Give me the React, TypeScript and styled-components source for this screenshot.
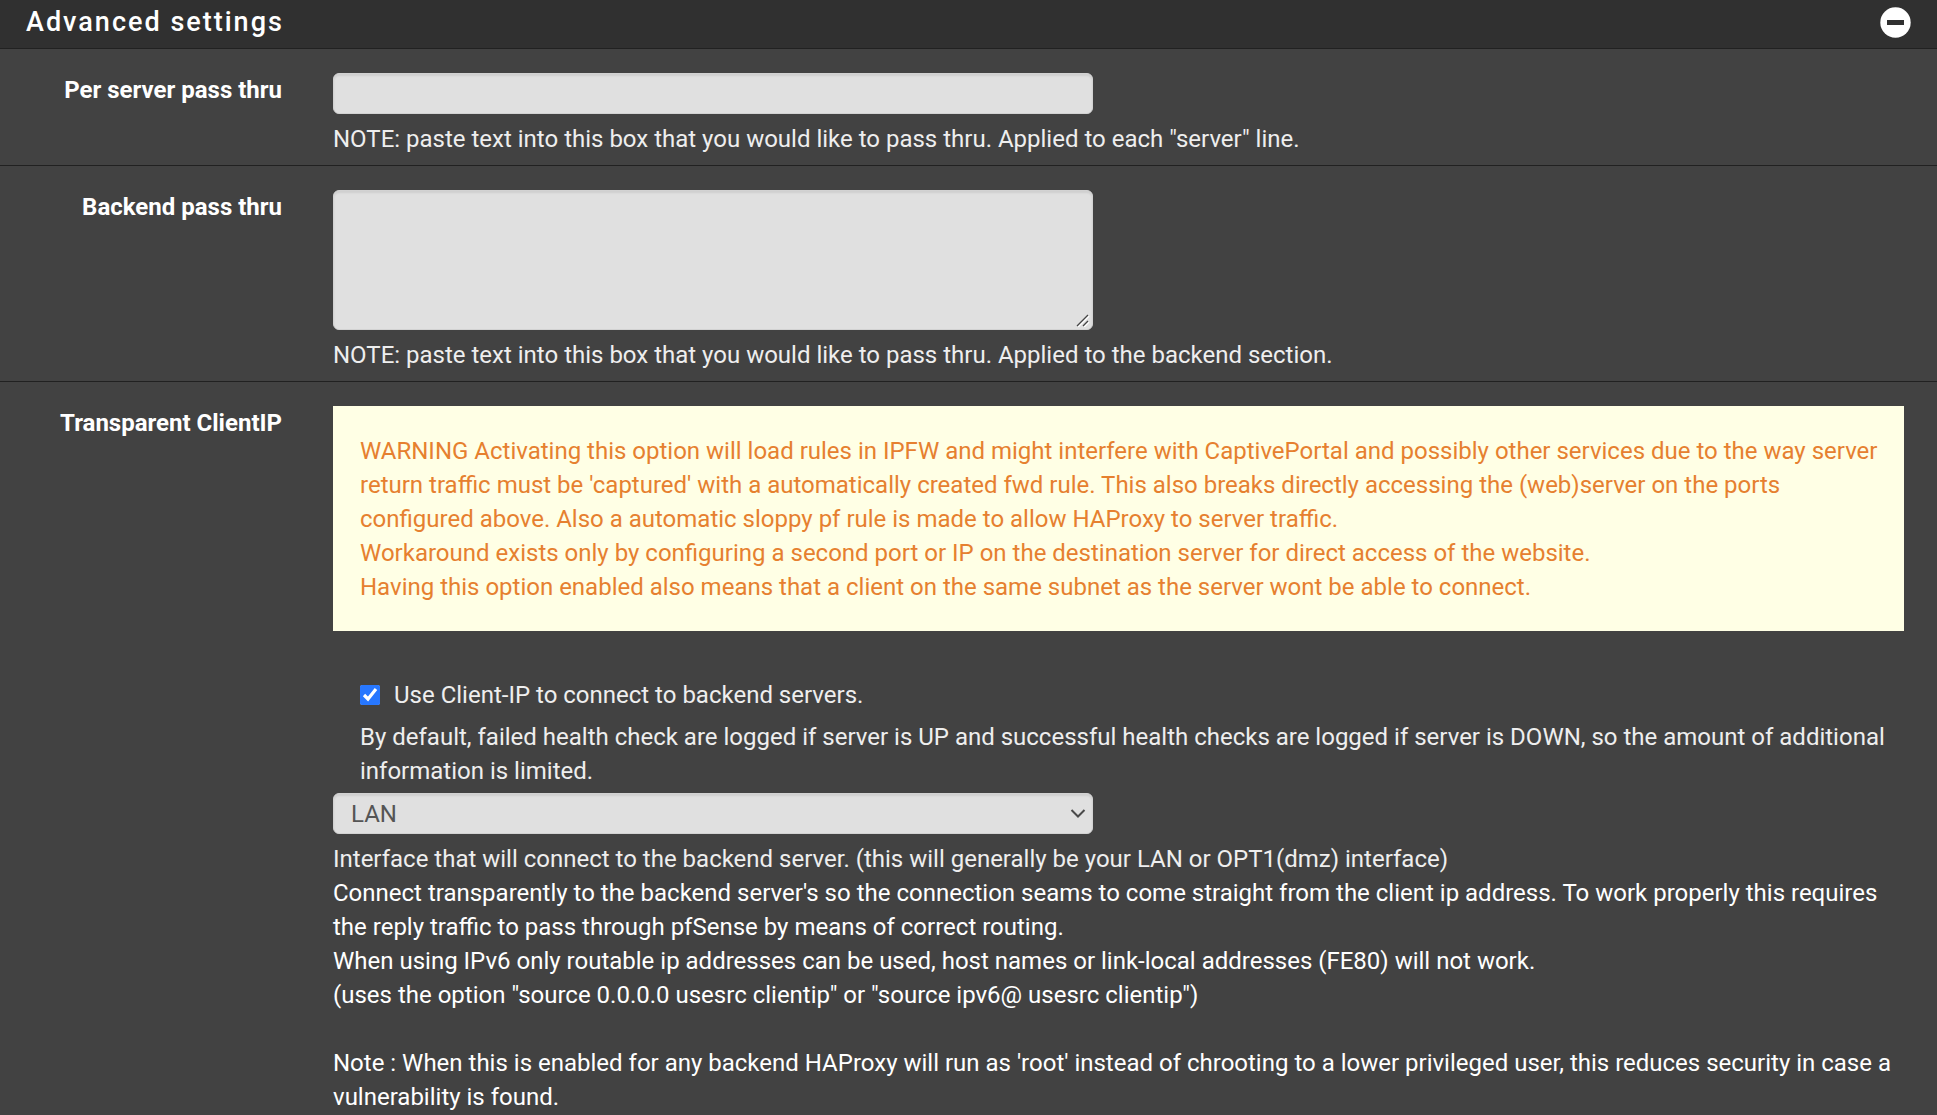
import React from "react";
import styled, { createGlobalStyle, css } from "styled-components";

const GlobalStyle = createGlobalStyle`
  *, *::before, *::after { box-sizing: border-box; }
  body {
    margin: 0;
    background: #424242;
    color: #ffffff;
    font-family: Roboto, "Liberation Sans", sans-serif;
    font-size: 24px;
    line-height: 34px;
  }
`;

const PanelHeader = styled.header`
  display: flex;
  align-items: center;
  justify-content: space-between;
  height: 49px;
  padding: 0 26px 4px;
  background: #303030;
  border-bottom: 1px solid #212121;
`;

const PanelTitle = styled.h2`
  margin: 0;
  font-size: 27px;
  font-weight: 500;
  letter-spacing: 2px;
`;

const CollapseButton = styled.button`
  display: flex;
  padding: 0;
  border: 0;
  background: none;
  color: #ffffff;
  cursor: pointer;
`;

const FormRow = styled.div`
  display: grid;
  grid-template-columns: 282px minmax(0, 1fr);
  column-gap: 51px;
  padding: 24px 33px 9px 0;
  border-bottom: 1px solid #212121;

  &:last-child {
    padding-bottom: 0;
    border-bottom: 0;
  }
`;

const labelText = css`
  font-weight: 700;
  text-align: right;
`;

const RowLabel = styled.label`
  ${labelText}
`;

const RowHeading = styled.div`
  ${labelText}
`;

const controlBox = css`
  display: block;
  width: 100%;
  margin: 0;
  border: 1px solid #d2d2d2;
  border-radius: 6px;
  background: #e0e0e0;
  box-shadow: inset 0 2px 2px rgba(0, 0, 0, 0.08);
  color: #555555;
  font: inherit;
`;

const ControlFrame = styled.div`
  position: relative;
  max-width: 760px;
`;

const TextInput = styled.input`
  ${controlBox}
  height: 41px;
  padding: 0 17px;
`;

const TextArea = styled.textarea`
  ${controlBox}
  height: 140px;
  padding: 8px 17px;
  resize: vertical;

  &::-webkit-resizer { background: transparent; }
`;

const Select = styled.select`
  ${controlBox}
  height: 41px;
  padding: 0 40px 0 17px;
  appearance: none;
`;

const Grip = styled.svg`
  position: absolute;
  right: 3px;
  bottom: 3px;
  pointer-events: none;
`;

const Chevron = styled.svg`
  position: absolute;
  right: 7px;
  top: 15px;
  pointer-events: none;
`;

const Help = styled.p`
  margin: 8px 0 0;
  color: #eeeeee;
`;

const Warning = styled.div`
  padding: 28px 16px 27px 27px;
  background: #ffffe5;
  color: #e6802f;
`;

const CheckGroup = styled.div`
  padding: 47px 16px 5px 27px;
  color: #eeeeee;
`;

const CheckLabel = styled.label`
  display: flex;
  align-items: center;
  gap: 14px;
`;

const Checkbox = styled.input`
  width: 20px;
  height: 20px;
  margin: 0;
  accent-color: #2777ff;
`;

const Description = styled.p`
  margin: 0;
`;

export default function App() {
  return (
    <>
      <GlobalStyle />
      <section aria-labelledby="advanced-title">
        <PanelHeader>
          <PanelTitle id="advanced-title">Advanced settings</PanelTitle>
          <CollapseButton type="button" aria-label="Collapse panel">
            <svg width="31" height="31" viewBox="0 0 31 31" aria-hidden="true">
              <circle cx="15.5" cy="15.5" r="15.2" fill="currentColor" />
              <rect x="7" y="13" width="17" height="5" fill="#303030" />
            </svg>
          </CollapseButton>
        </PanelHeader>

        <form>
          <FormRow>
            <RowLabel htmlFor="server-pass">Per server pass thru</RowLabel>
            <div>
              <ControlFrame>
                <TextInput id="server-pass" type="text" />
              </ControlFrame>
              <Help>
                NOTE: paste text into this box that you would like to pass thru. Applied to each "server" line.
              </Help>
            </div>
          </FormRow>

          <FormRow>
            <RowLabel htmlFor="backend-pass">Backend pass thru</RowLabel>
            <div>
              <ControlFrame>
                <TextArea id="backend-pass" />
                <Grip width="14" height="14" viewBox="0 0 14 14" aria-hidden="true">
                  <path d="M2 14 13 3M8 14l5-5" stroke="#ffffff" strokeWidth="1.5" />
                  <path d="M1 13 12 2M7 13l5-5" stroke="#444444" strokeWidth="1.3" />
                </Grip>
              </ControlFrame>
              <Help>
                NOTE: paste text into this box that you would like to pass thru. Applied to the backend section.
              </Help>
            </div>
          </FormRow>

          <FormRow>
            <RowHeading>Transparent ClientIP</RowHeading>
            <div>
              <Warning>
                WARNING Activating this option will load rules in IPFW and might interfere with CaptivePortal and
                possibly other services due to the way server return traffic must be 'captured' with a automatically
                created fwd rule. This also breaks directly accessing the (web)server on the ports configured above.
                Also a automatic sloppy pf rule is made to allow HAProxy to server traffic.
                <br />
                Workaround exists only by configuring a second port or IP on the destination server for direct access
                of the website.
                <br />
                Having this option enabled also means that a client on the same subnet as the server wont be able to
                connect.
              </Warning>
              <CheckGroup>
                <CheckLabel>
                  <Checkbox type="checkbox" defaultChecked />
                  Use Client-IP to connect to backend servers.
                </CheckLabel>
                <Help>
                  By default, failed health check are logged if server is UP and successful health checks are logged if
                  server is DOWN, so the amount of additional information is limited.
                </Help>
              </CheckGroup>
              <ControlFrame>
                <Select aria-label="Interface" defaultValue="lan">
                  <option value="lan">LAN</option>
                </Select>
                <Chevron width="16" height="11" viewBox="0 0 16 11" aria-hidden="true">
                  <path d="M1.5 2 8 8.5 14.5 2" fill="none" stroke="#4a4a4a" strokeWidth="2" />
                </Chevron>
              </ControlFrame>
              <Help>
                Interface that will connect to the backend server. (this will generally be your LAN or OPT1(dmz)
                interface)
              </Help>
              <Description>
                Connect transparently to the backend server's so the connection seams to come straight from the client
                ip address. To work properly this requires the reply traffic to pass through pfSense by means of
                correct routing.
                <br />
                When using IPv6 only routable ip addresses can be used, host names or link-local addresses (FE80) will
                not work.
                <br />
                (uses the option "source 0.0.0.0 usesrc clientip" or "source ipv6@ usesrc clientip")
                <br />
                <br />
                Note : When this is enabled for any backend HAProxy will run as 'root' instead of chrooting to a lower
                privileged user, this reduces security in case a vulnerability is found.
              </Description>
            </div>
          </FormRow>
        </form>
      </section>
    </>
  );
}
